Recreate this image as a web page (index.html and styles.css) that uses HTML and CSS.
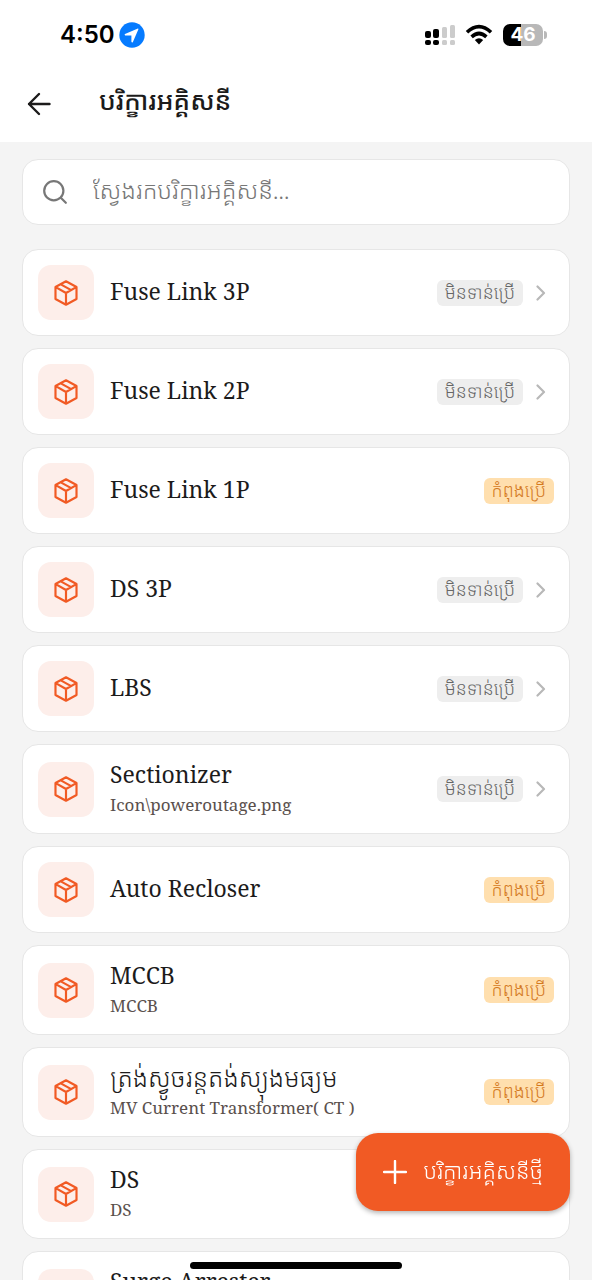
FILE: index.html
```html
<!DOCTYPE html>
<html lang="km">
<head>
<meta charset="utf-8">
<meta name="viewport" content="width=device-width, initial-scale=1">
<title>បរិក្ខារអគ្គិសនី</title>
<link rel="stylesheet" href="styles.css">
</head>
<body>
<svg class="defs" aria-hidden="true">
  <symbol id="box" viewBox="0 0 24 24"><path d="M12 1.2 21.7 6.4V17.6L12 22.8 2.3 17.6V6.4ZM2.5 6.6 12 12 21.5 6.6M12 12V22.6M7.2 4 16.8 9.3" /></symbol>
  <symbol id="chevron" viewBox="0 0 10 16"><path d="M1.5 1.5 8 8 1.5 14.5" /></symbol>
</svg>
<div class="screen">
  <header class="top">
    <div class="status">
      <div class="clock">
        <span>4:50</span>
        <svg width="26" height="26" viewBox="0 0 26 26"><circle cx="13" cy="13" r="12.7" fill="#067bff"/><path d="M18.9 6.6 6 12Q5 12.9 6.2 13.5H12.4V19.8Q13 21 13.9 19.9L19.4 7.2Q19.5 6.5 18.9 6.6Z" fill="#fff"/></svg>
      </div>
      <div class="signals">
        <svg width="32" height="22" viewBox="0 0 32 22">
          <g fill="#000"><rect x="1" y="7" width="6" height="7" rx="2"/><rect x="9" y="5" width="6" height="9" rx="2"/><rect x="1" y="16" width="6" height="5" rx="2"/><rect x="9" y="16" width="6" height="5" rx="2"/></g>
          <g fill="#ccc"><rect x="18" y="3" width="5" height="11" rx="1.5"/><rect x="26" y="1" width="5" height="13" rx="1.5"/><rect x="18" y="16" width="5" height="5" rx="1.5"/><rect x="26" y="16" width="5" height="5" rx="1.5"/></g>
        </svg>
        <svg width="28" height="22" viewBox="0 0 28 22"><g fill="none" stroke="#000" stroke-width="3.6"><path d="M2 8.2Q14-3 26 8.2"/><path d="M6.6 12.8Q14 6.2 21.4 12.8"/></g><path d="M9.8 16Q14 12.4 18.2 16L14 20.4Z"/></svg>
        <div class="battery"><span class="cell">46</span><span class="cap"></span></div>
      </div>
    </div>
    <div class="bar">
      <button class="back" aria-label="ថយក្រោយ"><svg width="24" height="24" viewBox="0 0 24 24"><path d="M22.5 12H2M12 2 2 12 12 22"/></svg></button>
      <h1 class="heading">បរិក្ខារអគ្គិសនី</h1>
    </div>
  </header>
  <main class="content">
    <label class="search">
      <svg width="24" height="24" viewBox="0 0 24 24"><circle cx="10.8" cy="10.8" r="9.6"/><path d="m17.8 17.8 5 5"/></svg>
      <input type="search" aria-label="ស្វែងរក" placeholder="ស្វែងរកបរិក្ខារអគ្គិសនី...">
    </label>
    <ul class="list">
      <li><button class="card"><span class="tile"><svg><use href="#box"/></svg></span><span class="text"><span class="name">Fuse Link 3P</span></span><span class="tag">មិនទាន់ប្រើ</span><svg class="chevron"><use href="#chevron"/></svg></button></li>
      <li><button class="card"><span class="tile"><svg><use href="#box"/></svg></span><span class="text"><span class="name">Fuse Link 2P</span></span><span class="tag">មិនទាន់ប្រើ</span><svg class="chevron"><use href="#chevron"/></svg></button></li>
      <li><button class="card"><span class="tile"><svg><use href="#box"/></svg></span><span class="text"><span class="name">Fuse Link 1P</span></span><span class="tag used">កំពុងប្រើ</span></button></li>
      <li><button class="card"><span class="tile"><svg><use href="#box"/></svg></span><span class="text"><span class="name">DS 3P</span></span><span class="tag">មិនទាន់ប្រើ</span><svg class="chevron"><use href="#chevron"/></svg></button></li>
      <li><button class="card"><span class="tile"><svg><use href="#box"/></svg></span><span class="text"><span class="name">LBS</span></span><span class="tag">មិនទាន់ប្រើ</span><svg class="chevron"><use href="#chevron"/></svg></button></li>
      <li><button class="card"><span class="tile"><svg><use href="#box"/></svg></span><span class="text"><span class="name">Sectionizer</span><span class="note">Icon\poweroutage.png</span></span><span class="tag">មិនទាន់ប្រើ</span><svg class="chevron"><use href="#chevron"/></svg></button></li>
      <li><button class="card"><span class="tile"><svg><use href="#box"/></svg></span><span class="text"><span class="name">Auto Recloser</span></span><span class="tag used">កំពុងប្រើ</span></button></li>
      <li><button class="card"><span class="tile"><svg><use href="#box"/></svg></span><span class="text"><span class="name">MCCB</span><span class="note">MCCB</span></span><span class="tag used">កំពុងប្រើ</span></button></li>
      <li><button class="card"><span class="tile"><svg><use href="#box"/></svg></span><span class="text"><span class="name khmer">ត្រង់ស្វូចរន្តតង់ស្យុងមធ្យម</span><span class="note">MV Current Transformer( CT )</span></span><span class="tag used">កំពុងប្រើ</span></button></li>
      <li><button class="card"><span class="tile"><svg><use href="#box"/></svg></span><span class="text"><span class="name">DS</span><span class="note">DS</span></span></button></li>
      <li><button class="card"><span class="tile"><svg><use href="#box"/></svg></span><span class="text"><span class="name">Surge Arrester</span><span class="note">&nbsp;</span></span></button></li>
    </ul>
  </main>
  <button class="add"><svg width="24" height="24" viewBox="0 0 24 24"><path d="M12 1V23M1 12H23"/></svg><span>បរិក្ខារអគ្គិសនីថ្មី</span></button>
  <div class="home"></div>
</div>
</body>
</html>
```
FILE: styles.css
```css
* { box-sizing: border-box; }
body {
  margin: 0;
  background: #f4f4f4;
  color: #1c1b1b;
  font-family: "Roboto Slab", "Noto Serif", "DejaVu Serif", "Noto Sans Khmer", "Khmer OS", serif;
}
button, input { font: inherit; color: inherit; }
.defs { position: absolute; width: 0; height: 0; }
.screen { height: 100vh; overflow: hidden; }
.top { background: #fff; padding: 16px 0 0; }
.status { display: flex; justify-content: space-between; align-items: center; height: 38px; padding: 0 45px 0 60px; }
.clock { display: flex; align-items: center; gap: 4px; color: #000; font: 600 24px/30px Inter, sans-serif; }
.signals { display: flex; align-items: center; gap: 9px; }
.battery { display: flex; align-items: center; gap: 1px; margin-left: 1px; }
.cell { width: 40px; height: 22px; border-radius: 7px; background: linear-gradient(90deg, #000 46%, #b8b8b8 46%); color: #fff; font: 700 19px/22px Inter, sans-serif; text-align: center; }
.cap { width: 3px; height: 8px; border-radius: 0 3px 3px 0; background: #b8b8b8; }
.bar { display: flex; align-items: center; height: 88px; padding: 12px 24px 0; gap: 45px; }
.back { display: flex; width: 30px; padding: 4px 3px; border: 0; background: none; }
.back svg { fill: none; stroke: #1c1b1b; stroke-width: 2.4; stroke-linecap: round; stroke-linejoin: round; }
.heading { margin: 0; padding-bottom: 8px; font-size: 26px; line-height: 40px; font-weight: 500; }
.content { padding: 17px 22px; }
.search { display: flex; align-items: center; gap: 26px; height: 66px; padding: 0 20px; border: 1px solid #e6e6e6; border-radius: 16px; background: #fff; }
.search svg { flex: none; fill: none; stroke: #777; stroke-width: 2.2; stroke-linecap: round; }
.search input { flex: 1; min-width: 0; height: 48px; padding: 0 0 6px; border: 0; outline: 0; background: none; font-size: 24px; font-weight: 300; appearance: none; }
.search input::placeholder { color: #777; opacity: 1; }
.list { display: grid; gap: 12px; margin: 24px 0 0; padding: 0; list-style: none; }
.card { display: flex; align-items: center; width: 100%; padding: 15px; border: 1px solid #e6e6e6; border-radius: 16px; background: #fff; text-align: left; }
.tile { display: flex; flex: none; align-items: center; justify-content: center; width: 56px; height: 55px; border-radius: 13px; background: #fdeeea; }
.tile svg { width: 26px; height: 26px; fill: none; stroke: #f15a24; stroke-width: 2; stroke-linejoin: round; stroke-linecap: round; }
.text { display: flex; flex: 1; flex-direction: column; min-width: 0; margin-left: 16px; }
.name { padding-bottom: 4px; font-size: 23px; line-height: 28px; white-space: nowrap; }
.khmer { font-size: 25px; font-weight: 300; }
.note { color: #5a504d; font-size: 17px; line-height: 26px; white-space: nowrap; }
.tag { flex: none; padding: 0 8px 2px; border-radius: 6px; background: #eee; color: #666; font-size: 18px; font-weight: 300; line-height: 24px; }
.used { background: #ffdfae; color: #d47a1f; }
.chevron { flex: none; width: 10px; height: 16px; margin: 0 8px 0 13px; fill: none; stroke: #b8b8b8; stroke-width: 2.2; stroke-linecap: round; stroke-linejoin: round; }
.add { position: fixed; right: 22px; bottom: 69px; display: flex; align-items: center; gap: 16px; height: 78px; padding: 0 27px; border: 0; border-radius: 22px; background: #f15a24; color: #fff; font-size: 22px; font-weight: 300; box-shadow: 0 2px 5px rgba(0, 0, 0, .3); }
.add svg { flex: none; fill: none; stroke: #fff; stroke-width: 2.4; stroke-linecap: round; }
.add span { padding-bottom: 4px; }
.home { position: fixed; left: 50%; bottom: 11px; width: 212px; height: 7px; border-radius: 4px; background: #000; transform: translateX(-50%); }
```
